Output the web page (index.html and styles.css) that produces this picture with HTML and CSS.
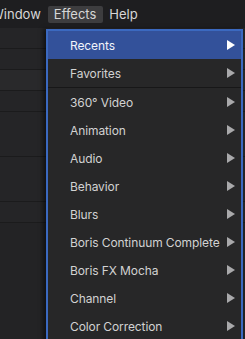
FILE: index.html
```html
<!DOCTYPE html>
<html>
<head>
<meta charset="utf-8">
<link rel="stylesheet" href="styles.css">
</head>
<body>
<div class="app">
  <div class="menubar">
    <span class="mb-item mb-window">Window</span>
    <span class="mb-item mb-active">Effects</span>
    <span class="mb-item">Help</span>
  </div>
  <div class="panel">
    <div class="prow"></div>
    <div class="prow"></div>
    <div class="prow light"></div>
    <div class="prow"></div>
    <div class="prow tall"></div>
    <div class="prow tall"></div>
    <div class="prow"></div>
  </div>
  <div class="menu">
    <div class="item selected"><span>Recents</span><i class="arrow"></i></div>
    <div class="item"><span>Favorites</span><i class="arrow"></i></div>
    <div class="sep"></div>
    <div class="item"><span>360° Video</span><i class="arrow"></i></div>
    <div class="item"><span>Animation</span><i class="arrow"></i></div>
    <div class="item"><span>Audio</span><i class="arrow"></i></div>
    <div class="item"><span>Behavior</span><i class="arrow"></i></div>
    <div class="item"><span>Blurs</span><i class="arrow"></i></div>
    <div class="item"><span>Boris Continuum Complete</span><i class="arrow"></i></div>
    <div class="item"><span>Boris FX Mocha</span><i class="arrow"></i></div>
    <div class="item"><span>Channel</span><i class="arrow"></i></div>
    <div class="item"><span>Color Correction</span><i class="arrow"></i></div>
  </div>
</div>
</body>
</html>
```
FILE: styles.css
```css
html, body {
  margin: 0;
  padding: 0;
  background: #232325;
  overflow: hidden;
}
.app {
  position: relative;
  width: 245px;
  height: 339px;
  font-family: Inter, "Noto Sans", sans-serif;
  font-size: 12px;
  color: #d8d8d8;
}
.menubar {
  height: 28px;
  background: #1e1e20;
  display: flex;
  align-items: center;
  font-size: 13px;
  color: #d6d6d6;
  white-space: nowrap;
}
.mb-item {
  padding: 1px 7px 2px 6px;
  line-height: 14px;
}
.mb-window {
  margin-left: -9px;
  padding: 1px 7px 2px 0;
}
.mb-active {
  background: #3d3d3f;
  border-radius: 2px;
}
.panel {
  display: flex;
  flex-direction: column;
}
.prow {
  height: 20px;
  border-bottom: 1px solid #1b1b1c;
  background: #252527;
}
.prow.light { background: #29292b; }
.prow.tall { height: 44px; }
.menu {
  position: absolute;
  left: 46px;
  top: 29px;
  width: 193px;
  height: 320px;
  background: #272728;
  border: 2px solid #3b69c0;
  border-bottom: none;
  box-shadow: -3px 0 4px rgba(0,0,0,0.5);
  display: flex;
  flex-direction: column;
}
.item {
  height: 28px;
  flex: none;
  display: flex;
  align-items: center;
  justify-content: space-between;
  padding: 0 6px 0 22px;
  color: #d2d2d2;
  white-space: nowrap;
  letter-spacing: -0.1px;
}
.item.selected {
  background: #33519a;
  color: #f2f4fa;
}
.arrow {
  flex: none;
  width: 0;
  height: 0;
  border-top: 5px solid transparent;
  border-bottom: 5px solid transparent;
  border-left: 8px solid #a9a9ab;
}
.selected .arrow { border-left-color: #ffffff; }
.sep {
  height: 1px;
  background: #171718;
  flex: none;
}
```
